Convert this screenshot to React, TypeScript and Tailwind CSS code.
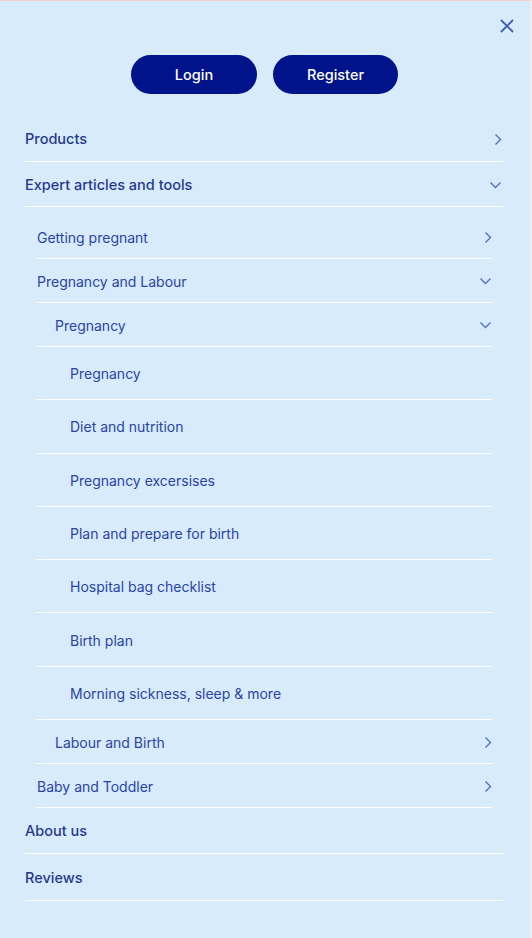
import React from "react"

type Item = {
  label: string
  level: 2 | 3 | 4
  icon?: "right" | "down"
}

const items: Item[] = [
  { label: "Getting pregnant", level: 2, icon: "right" },
  { label: "Pregnancy and Labour", level: 2, icon: "down" },
  { label: "Pregnancy", level: 3, icon: "down" },
  { label: "Pregnancy", level: 4 },
  { label: "Diet and nutrition", level: 4 },
  { label: "Pregnancy excersises", level: 4 },
  { label: "Plan and prepare for birth", level: 4 },
  { label: "Hospital bag checklist", level: 4 },
  { label: "Birth plan", level: 4 },
  { label: "Morning sickness, sleep & more", level: 4 },
  { label: "Labour and Birth", level: 3, icon: "right" },
  { label: "Baby and Toddler", level: 2, icon: "right" },
]

function Chevron({ dir }: { dir: "right" | "down" }) {
  if (dir === "right") {
    return (
      <svg width="8" height="13" viewBox="0 0 8 13" fill="none" className="shrink-0">
        <path d="M1.5 1.5 L6.5 6.5 L1.5 11.5" stroke="#4f72c2" strokeWidth="1.4" />
      </svg>
    )
  }
  return (
    <svg width="13" height="8" viewBox="0 0 13 8" fill="none" className="shrink-0">
      <path d="M1.5 1.5 L6.5 6.5 L11.5 1.5" stroke="#4f72c2" strokeWidth="1.4" />
    </svg>
  )
}

function TopRow({ label, icon, h }: { label: string; icon?: "right" | "down"; h: string }) {
  return (
    <div className={`flex items-center justify-between border-b border-white pt-[1px] ${h}`}>
      <span className="text-[14.5px] font-medium text-[#26398f]">{label}</span>
      {icon && <span className="mr-[2px]"><Chevron dir={icon} /></span>}
    </div>
  )
}

export default function App() {
  return (
    <div
      className="w-[532px] h-[938px] bg-[#d7ebfa] border-t border-[#f3cfcf] border-r-2 border-r-[#eceff1] overflow-hidden"
      style={{ fontFamily: "Inter, 'Noto Sans', sans-serif" }}
    >
      <div className="flex justify-end pt-[17px] pr-[15px] h-[42px]">
        <svg width="16" height="16" viewBox="0 0 16 16" fill="none">
          <path d="M2 2 L14 14 M14 2 L2 14" stroke="#3a5fb5" strokeWidth="1.8" />
        </svg>
      </div>

      <div className="flex justify-center gap-4 pr-[1px] mt-[12px]">
        <button className="w-[126px] h-[39px] rounded-full bg-[#00138a] text-white text-[14.5px] font-medium">
          Login
        </button>
        <button className="w-[125px] h-[39px] rounded-full bg-[#00138a] text-white text-[14.5px] font-medium">
          Register
        </button>
      </div>

      <nav className="ml-[25px] w-[479px] mt-[22px]">
        <TopRow label="Products" icon="right" h="h-[46px]" />
        <TopRow label="Expert articles and tools" icon="down" h="h-[45px]" />

        <div className="ml-[12px] mr-[12px] pt-[8px]">
          {items.map((it, i) => {
            const pad = it.level === 2 ? "pl-0" : it.level === 3 ? "pl-[18px]" : "pl-[33px]"
            const h = it.level === 4 ? "h-[53.3px]" : "h-[44px]"
            return (
              <div key={i} className={`flex items-center justify-between border-b border-white pt-[1px] ${h} ${pad}`}>
                <span className="text-[14px] text-[#2b44a6]">{it.label}</span>
                {it.icon && <Chevron dir={it.icon} />}
              </div>
            )
          })}
        </div>

        <TopRow label="About us" h="h-[46px]" />
        <TopRow label="Reviews" h="h-[47px]" />
      </nav>
    </div>
  )
}
